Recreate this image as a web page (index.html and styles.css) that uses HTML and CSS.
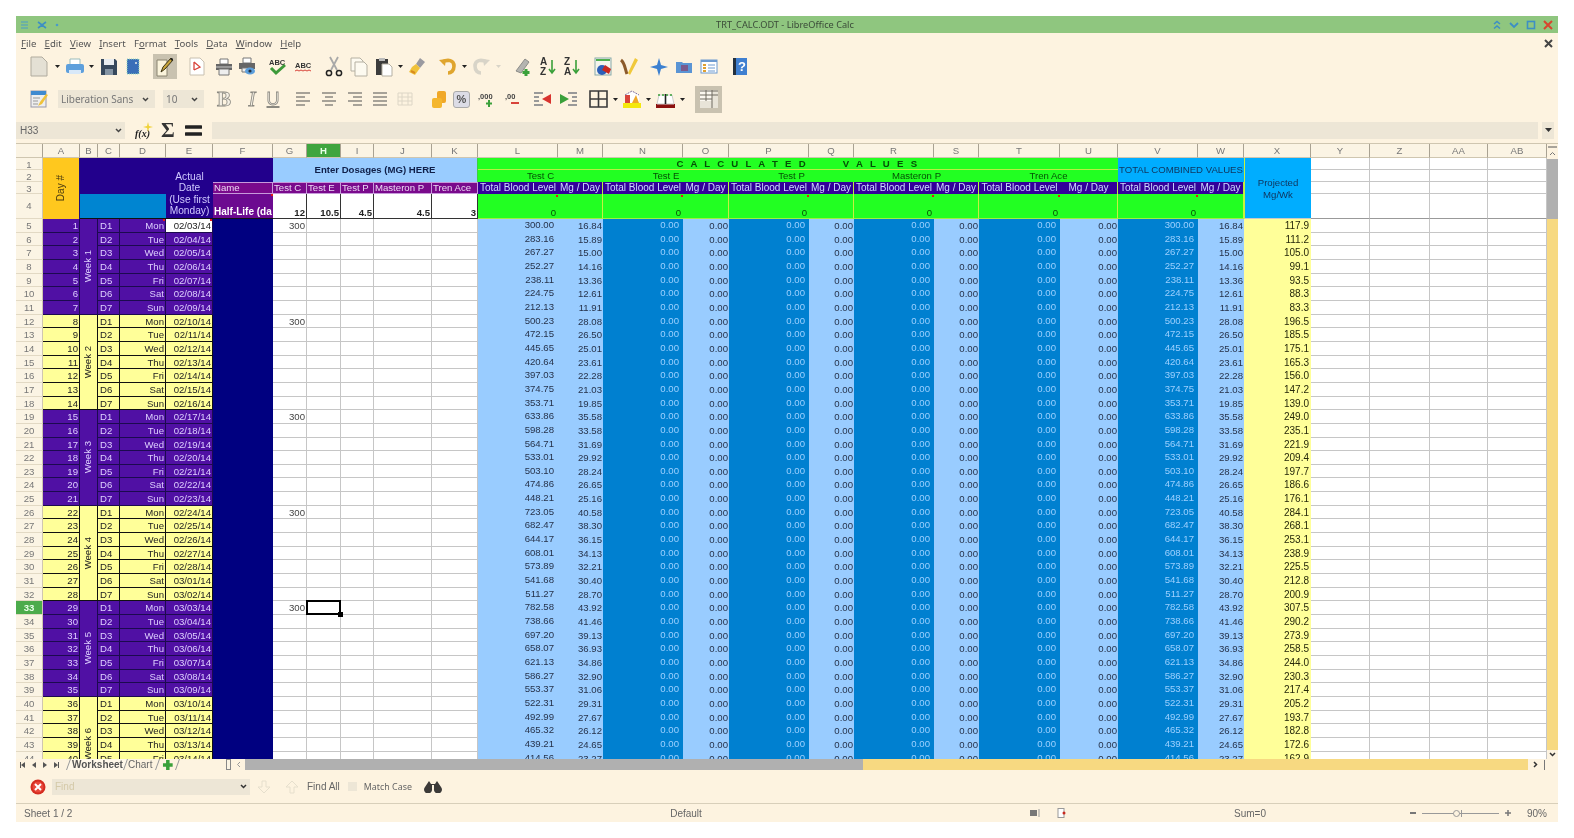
FILE: index.html
```html
<!DOCTYPE html>
<html lang="en">
<head>
    <meta charset="UTF-8">
    <title>TRT_CALC.ODT - LibreOffice Calc</title>
    <link rel="stylesheet" href="styles.css">
</head>
<body>
<div class="window">
    <!-- Title bar -->
    <div class="titlebar">
        <div class="wm-left">
            <svg width="10" height="8" viewBox="0 0 10 8"><path d="M1 1h7M1 4h7M1 7h7" stroke="#4a9bc8" stroke-width="1.2"/></svg>
            <svg class="m7" width="10" height="8" viewBox="0 0 10 8"><path d="M1 1l4 3 4-3M1 7l4-3 4 3" stroke="#3d8fc4" stroke-width="1.6" fill="none"/></svg>
            <svg class="m7" width="6" height="6" viewBox="0 0 6 6"><circle cx="3" cy="3" r="1.3" fill="#4a9bc8"/></svg>
        </div>
        <span class="title-text">TRT_CALC.ODT - LibreOffice Calc</span>
        <div class="wm-right">
            <svg width="10" height="10" viewBox="0 0 10 10"><path d="M2 4l3-2.500 3 2.500M2 8.500l3-2.500 3 2.500" stroke="#3d8fc4" stroke-width="1.6" fill="none"/></svg>
            <svg class="m7" width="10" height="10" viewBox="0 0 10 10"><path d="M1 3l4 4 4-4" stroke="#3d8fc4" stroke-width="1.8" fill="none"/></svg>
            <svg class="m7" width="10" height="10" viewBox="0 0 10 10"><rect x="1.5" y="1.5" width="7" height="7" stroke="#3d8fc4" stroke-width="1.6" fill="none"/></svg>
            <svg class="m7" width="10" height="10" viewBox="0 0 10 10"><path d="M1 1l8 8M9 1l-8 8" stroke="#d8452e" stroke-width="2"/></svg>
        </div>
    </div>

    <!-- Menu -->
    <div class="menubar">
        <span><u>F</u>ile</span><span><u>E</u>dit</span><span><u>V</u>iew</span><span><u>I</u>nsert</span><span>F<u>o</u>rmat</span><span><u>T</u>ools</span><span><u>D</u>ata</span><span><u>W</u>indow</span><span><u>H</u>elp</span>
        <svg class="menu-close" width="9" height="9" viewBox="0 0 9 9"><path d="M1 1l7 7M8 1l-7 7" stroke="#444" stroke-width="2"/></svg>
    </div>

    <!-- Standard toolbar -->
    <div class="toolbar tb-top">
        <svg width="18" height="21" viewBox="0 0 18 21"><path d="M1 1h11l5 5v14H1z" fill="#e4e0d4" stroke="#b0ab9e"/></svg>
        <svg class="m7 caret" width="5" height="3" viewBox="0 0 5 3"><path d="M0 0h5L2.5 3z"/></svg>
        <svg class="m5" width="20" height="18" viewBox="0 0 20 18"><path d="M5 1h10v6H5z" fill="#fff" stroke="#9bb"/><rect x="1" y="6" width="18" height="9" rx="2" fill="#5d9fdc"/><rect x="4" y="12" width="12" height="4" fill="#d8e8f8"/></svg>
        <svg class="m4 caret" width="5" height="3" viewBox="0 0 5 3"><path d="M0 0h5L2.5 3z"/></svg>
        <svg class="m6" width="18" height="18" viewBox="0 0 18 18"><path d="M1 1h14l2 2v14H1z" fill="#36485c"/><rect x="4" y="1" width="10" height="6" fill="#e8ecf0"/><rect x="5" y="11" width="8" height="6" fill="#8494a4"/></svg>
        <svg class="m8" width="14" height="17" viewBox="0 0 14 17"><rect x="1" y="1" width="12" height="15" fill="#3a6fb8" stroke="#9db" stroke-dasharray="1 1"/><rect x="9" y="4" width="2" height="2" fill="#bcd"/></svg>
        <div class="tb-btn m13 btn-edit">
            <svg width="18" height="20" viewBox="0 0 18 20"><path d="M1 3h10v16H1z" fill="#fbf4dc" stroke="#8a8470"/><path d="M5 15l2-5 8-9 2 2-8 9z" fill="#c9a53a" stroke="#3a3216"/><path d="M14 2l2 2 1-2-1-1z" fill="#222"/></svg>
        </div>
        <svg class="m12" width="16" height="19" viewBox="0 0 16 19"><path d="M1 1h10l4 4v13H1z" fill="#fff" stroke="#c8c0b0"/><path d="M5 5l6 5-6 3M5 5v8" fill="none" stroke="#d8433a" stroke-width="1.3"/></svg>
        <svg class="m10" width="18" height="18" viewBox="0 0 18 18"><path d="M5 1h8v5H5z" fill="#fff" stroke="#777"/><rect x="1" y="6" width="16" height="6" fill="#666"/><path d="M4 11h10v6H4z" fill="#eee" stroke="#777"/><path d="M1 9h16" stroke="#ccc"/></svg>
        <svg class="m5" width="18" height="19" viewBox="0 0 18 19"><path d="M5 1h8v5H5z" fill="#fff" stroke="#777"/><rect x="1" y="6" width="16" height="6" fill="#666"/><path d="M4 11h9v4H4z" fill="#eee" stroke="#777"/><ellipse cx="12" cy="14" rx="5" ry="3.6" fill="#5d9fdc"/><circle cx="12" cy="14" r="1.6" fill="#234"/></svg>
        <svg class="m12" width="20" height="19" viewBox="0 0 20 19"><text x="1" y="8" class="svg-abc">ABC</text><path d="M3 11l5 5 9-8" fill="none" stroke="#3d9a3a" stroke-width="3"/></svg>
        <svg class="m7" width="16" height="15" viewBox="0 0 16 15"><text x="0" y="9" class="svg-abc">ABC</text><path d="M0 12l2-1 2 1 2-1 2 1 2-1 2 1 2-1 2 1" fill="none" stroke="#d8433a"/></svg>
        <svg class="m14" width="18" height="21" viewBox="0 0 18 21"><path d="M5 1l7 13M13 1L6 14" stroke="#a8a8a8" stroke-width="1.8"/><circle cx="4" cy="17" r="2.6" fill="none" stroke="#222" stroke-width="1.5"/><circle cx="14" cy="17" r="2.6" fill="none" stroke="#222" stroke-width="1.5"/></svg>
        <svg class="m7" width="18" height="20" viewBox="0 0 18 20"><path d="M1 1h9l3 3v10H1z" fill="#fdfaf0" stroke="#b5b0a2"/><path d="M5 5h9l3 3v11H5z" fill="#fdfaf0" stroke="#b5b0a2"/></svg>
        <svg class="m7" width="18" height="20" viewBox="0 0 18 20"><rect x="1" y="2" width="12" height="16" fill="#3c3c3c"/><rect x="4" y="1" width="6" height="3" fill="#bbb"/><path d="M7 7h7l3 3v9H7z" fill="#fff" stroke="#b5b0a2"/></svg>
        <svg class="m5 caret" width="5" height="3" viewBox="0 0 5 3"><path d="M0 0h5L2.5 3z"/></svg>
        <svg class="m5" width="18" height="19" viewBox="0 0 18 19"><path d="M12 1l5 4-5 6-4-4z" fill="#9a9aa0"/><path d="M8 7l4 4-5 7-6-3 3-5z" fill="#f0c23a"/><path d="M3 14l4 2" stroke="#d88a1e" stroke-width="2"/></svg>
        <svg class="m12" width="19" height="18" viewBox="0 0 19 18"><path d="M4 4c6-3 12-2 12 4 0 5-3 7-6 7" fill="none" stroke="#dfa52e" stroke-width="3.6"/><path d="M1 2l7-1-1 7z" fill="#dfa52e"/></svg>
        <svg class="m5 caret" width="5" height="3" viewBox="0 0 5 3"><path d="M0 0h5L2.5 3z"/></svg>
        <svg class="m5" width="19" height="18" viewBox="0 0 19 18"><path d="M15 4C9 1 3 2 3 8c0 5 3 7 6 7" fill="none" stroke="#d8d4c8" stroke-width="3.6"/><path d="M18 2l-7-1 1 7z" fill="#d8d4c8"/></svg>
        <svg class="m5 caret-pale" width="5" height="3" viewBox="0 0 5 3"><path d="M0 0h5L2.5 3z"/></svg>
        <svg class="m12" width="20" height="19" viewBox="0 0 20 19"><path d="M3 14L12 2l4 3-8 11z" fill="#b4b4b0" stroke="#8c8c88"/><path d="M13 12v7M9.500 15.500h7" stroke="#3aa03a" stroke-width="3"/></svg>
        <svg class="m7" width="16" height="19" viewBox="0 0 16 19"><text x="0" y="8" class="svg-sort">A</text><text x="0" y="18" class="svg-sort">Z</text><path d="M12 3v12M9 12l3 4 3-4" fill="none" stroke="#3aa03a" stroke-width="1.6"/></svg>
        <svg class="m8" width="16" height="19" viewBox="0 0 16 19"><text x="0" y="8" class="svg-sort">Z</text><text x="0" y="18" class="svg-sort">A</text><path d="M12 3v12M9 12l3 4 3-4" fill="none" stroke="#3aa03a" stroke-width="1.6"/></svg>
        <svg class="m14" width="19" height="19" viewBox="0 0 19 19"><rect x="1" y="1" width="16" height="17" fill="#f4f4ec" stroke="#8aa"/><rect x="2" y="2" width="14" height="2" fill="#4fae4f"/><circle cx="8" cy="13" r="5" fill="#2c5fb8"/><path d="M8 13l3-5 6 4-2 5z" fill="#c8281e"/></svg>
        <svg class="m7" width="18" height="19" viewBox="0 0 18 19"><path d="M1 3c4 3 4 9 6 14" fill="none" stroke="#8c5a2a" stroke-width="3"/><path d="M8 16L15 1l3 2-8 15z" fill="#f0c83a"/></svg>
        <svg class="m12" width="18" height="18" viewBox="0 0 18 18"><path d="M9 0l2 7 7 2-7 2-2 7-2-7-7-2 7-2z" fill="#3c80d0"/></svg>
        <svg class="m7" width="18" height="15" viewBox="0 0 18 15"><path d="M1 3h6l1 1h9v10H1z" fill="#5a94d4"/><rect x="6" y="6" width="7" height="6" fill="#7a5a8c"/></svg>
        <svg class="m7" width="18" height="15" viewBox="0 0 18 15"><rect x="1" y="1" width="16" height="13" fill="#fff" stroke="#6c9ad0"/><rect x="1" y="1" width="16" height="2" fill="#6c9ad0"/><path d="M3 6h3M3 9h3M3 12h3" stroke="#e0a030" stroke-width="2"/><path d="M8 6h7M8 9h7M8 12h7" stroke="#6c9ad0"/></svg>
        <svg class="m15" width="14" height="17" viewBox="0 0 14 17"><rect x="0" y="0" width="14" height="17" fill="#3f7fd0"/><rect x="0" y="0" width="3" height="17" fill="#23303e"/><text x="5" y="13" class="svg-help">?</text></svg>
    </div>

    <!-- Formatting toolbar -->
    <div class="toolbar tb-format">
        <svg width="18" height="18" viewBox="0 0 18 18"><rect x="1" y="1" width="15" height="16" fill="#eee" stroke="#99a"/><rect x="1" y="1" width="15" height="4" fill="#3f8ad0"/><path d="M3 8h7M3 11h5M3 14h5" stroke="#999"/><path d="M8 16l2-4 6-8 2 1-6 9z" fill="#f0c23a"/></svg>
        <div class="combo m10 font-box"><span>Liberation Sans</span><svg width="7" height="5" viewBox="0 0 7 5"><path d="M1 1l2.500 2.500L6 1" stroke="#444" stroke-width="1.5" fill="none"/></svg></div>
        <div class="combo m8 size-box"><span>10</span><svg width="7" height="5" viewBox="0 0 7 5"><path d="M1 1l2.500 2.500L6 1" stroke="#444" stroke-width="1.5" fill="none"/></svg></div>
        <span class="fmt-letter m12 fmt-b">B</span>
        <span class="fmt-letter m13 fmt-i">I</span>
        <span class="fmt-letter m7 fmt-u">U</span>
        <svg class="m16 align" width="14" height="14" viewBox="0 0 14 14"><path d="M0 1h14M0 5h9M0 9h14M0 13h9"/></svg>
        <svg class="m12 align" width="14" height="14" viewBox="0 0 14 14"><path d="M0 1h14M3 5h8M0 9h14M3 13h8"/></svg>
        <svg class="m12 align" width="14" height="14" viewBox="0 0 14 14"><path d="M0 1h14M5 5h9M0 9h14M5 13h9"/></svg>
        <svg class="m11 align" width="14" height="14" viewBox="0 0 14 14"><path d="M0 1h14M0 5h14M0 9h14M0 13h14"/></svg>
        <svg class="m10" width="16" height="14" viewBox="0 0 16 14"><path d="M1 1h14v12H1zM1 5h14M1 9h14M5 1v12M11 1v12" fill="none" stroke="#ddd6c6"/></svg>
        <svg class="m19" width="14" height="17" viewBox="0 0 14 17"><rect x="5" y="0" width="9" height="12" rx="2" fill="#f0a828"/><rect x="0" y="7" width="10" height="10" rx="2" fill="#f4b62e"/></svg>
        <div class="pct m7">%</div>
        <svg class="m8" width="17" height="18" viewBox="0 0 17 18"><text x="0" y="9" class="svg-num">,000</text><path d="M11 10v7M8 13.500h6" stroke="#3aa03a" stroke-width="2"/></svg>
        <svg class="m10" width="15" height="18" viewBox="0 0 15 18"><text x="0" y="9" class="svg-num">,00</text><path d="M6 13h8" stroke="#d8433a" stroke-width="2"/></svg>
        <svg class="m14" width="18" height="16" viewBox="0 0 18 16"><path d="M0 2h9M0 6h5M0 10h5M0 14h9" stroke="#999" stroke-width="2"/><path d="M17 3v10l-9-5z" fill="#d8332e"/></svg>
        <svg class="m7" width="18" height="16" viewBox="0 0 18 16"><path d="M9 2h9M13 6h5M13 10h5M9 14h9" stroke="#999" stroke-width="2"/><path d="M1 3v10l9-5z" fill="#3aa03a"/></svg>
        <svg class="m12" width="19" height="18" viewBox="0 0 19 18"><path d="M1 1h17v16H1zM9.500 1v16M1 9h17" fill="none" stroke="#3a3a3a" stroke-width="1.6"/></svg>
        <svg class="m5 caret" width="5" height="3" viewBox="0 0 5 3"><path d="M0 0h5L2.500 3z"/></svg>
        <svg class="m5" width="18" height="18" viewBox="0 0 18 18"><rect x="0" y="13" width="18" height="5" fill="#f4e80e"/><path d="M2 13V5l7-4 7 4v8z" fill="#fff"/><path d="M2 5h5v8H2z" fill="#d8433a"/><path d="M9 13l4-8 3 8z" fill="#f0a828"/><path d="M2 5l7-4 7 4" fill="none" stroke="#7a6a9c" stroke-dasharray="2 1"/></svg>
        <svg class="m5 caret" width="5" height="3" viewBox="0 0 5 3"><path d="M0 0h5L2.500 3z"/></svg>
        <svg class="m5" width="19" height="18" viewBox="0 0 19 18"><rect x="0" y="14" width="19" height="4" fill="#8c1010"/><path d="M1 14l2-9h13l2 9z" fill="#fff" stroke="#ccc"/><path d="M9.500 4v10" stroke="#222" stroke-width="1.6"/><path d="M2 5h15" stroke="#3aa03a" stroke-dasharray="2 2" stroke-width="1.500"/></svg>
        <svg class="m5 caret" width="5" height="3" viewBox="0 0 5 3"><path d="M0 0h5L2.500 3z"/></svg>
        <div class="tb-btn m10 btn-grid">
            <svg width="18" height="18" viewBox="0 0 18 18"><rect width="18" height="18" fill="#e8e4d8"/><rect width="12" height="11" fill="#fbf8f0"/><path d="M0 5h18M0 9h12M0 1h18M6 0v11M12 0v18" stroke="#6f6a60" fill="none"/></svg>
        </div>
    </div>

    <!-- Formula bar -->
    <div class="formulabar">
        <div class="namebox"><span>H33</span><svg width="7" height="5" viewBox="0 0 7 5"><path d="M1 1l2.500 2.500L6 1" stroke="#444" stroke-width="1.5" fill="none"/></svg></div>
        <div class="fx"><span class="fx-text">f(x)</span><svg class="fx-star" width="10" height="10" viewBox="0 0 10 10"><path d="M5 0l1 4 4 1-4 1-1 4-1-4-4-1 4-1z" fill="#f0d23a"/></svg></div>
        <span class="sigma">Σ</span>
        <svg class="m9" width="17" height="13" viewBox="0 0 17 13"><path d="M1 3h15M1 10h15" stroke="#222" stroke-width="3.400" stroke-linecap="round"/></svg>
        <div class="formula-input"></div>
        <div class="formula-drop"><svg width="7" height="4" viewBox="0 0 7 4"><path d="M0 0h7L3.500 4z" fill="#333"/></svg></div>
    </div>

    <!-- Spreadsheet -->
    <div class="sheet-wrap">
        <div class="sheet" id="sheet">
            <div class="colh"></div>
            <div class="colh">A</div><div class="colh">B</div><div class="colh">C</div><div class="colh">D</div><div class="colh">E</div><div class="colh">F</div><div class="colh">G</div><div class="colh colh-on">H</div><div class="colh">I</div><div class="colh">J</div><div class="colh">K</div><div class="colh">L</div><div class="colh">M</div><div class="colh">N</div><div class="colh">O</div><div class="colh">P</div><div class="colh">Q</div><div class="colh">R</div><div class="colh">S</div><div class="colh">T</div><div class="colh">U</div><div class="colh">V</div><div class="colh">W</div><div class="colh">X</div><div class="colh">Y</div><div class="colh">Z</div><div class="colh">AA</div><div class="colh">AB</div>

            <!-- row 1 -->
            <div class="rh">1</div>
            <div class="c day-head r4"><span>Day #</span></div>
            <div class="c navy-top cs3 r3"></div>
            <div class="c date-head r4">Actual<br>Date<br>(Use first<br>Monday)</div>
            <div class="c navy-top r2"></div>
            <div class="c dose-head cs5 r2">Enter Dosages (MG) HERE</div>
            <div class="c calc-head cs10">C A L C U L A T E D       V A L U E S</div>
            <div class="c total-head cs2 r2">TOTAL COMBINED VALUES</div>
            <div class="c proj-head r4">Projected<br>Mg/Wk</div>
            <div class="c blank"></div><div class="c blank"></div><div class="c blank"></div><div class="c blank"></div>

            <!-- row 2 -->
            <div class="rh">2</div>
            <div class="c calc-sub cs2">Test C</div><div class="c calc-sub cs2">Test E</div><div class="c calc-sub cs2">Test P</div><div class="c calc-sub cs2">Masteron P</div><div class="c calc-sub cs2">Tren Ace</div>
            <div class="c blank"></div><div class="c blank"></div><div class="c blank"></div><div class="c blank"></div>

            <!-- row 3 -->
            <div class="rh">3</div>
            <div class="c name-cell">Name</div>
            <div class="c name-cell">Test C</div><div class="c name-cell">Test E</div><div class="c name-cell">Test P</div><div class="c name-cell">Masteron P</div><div class="c name-cell">Tren Ace</div>
            <div class="c calc-label">Total Blood Level</div><div class="c calc-label lab-end">Mg / Day</div>
            <div class="c calc-label">Total Blood Level</div><div class="c calc-label lab-end">Mg / Day</div>
            <div class="c calc-label">Total Blood Level</div><div class="c calc-label lab-end">Mg / Day</div>
            <div class="c calc-label">Total Blood Level</div><div class="c calc-label lab-end">Mg / Day</div>
            <div class="c calc-label">Total Blood Level</div><div class="c calc-label lab-end">Mg / Day</div>
            <div class="c calc-label">Total Blood Level</div><div class="c calc-label lab-end">Mg / Day</div>
            <div class="c blank"></div><div class="c blank"></div><div class="c blank"></div><div class="c blank"></div>

            <!-- row 4 -->
            <div class="rh rh-tall">4</div>
            <div class="c blue-fill cs3"></div>
            <div class="c half-life note">Half-Life (da</div>
            <div class="c halflife-val">12</div><div class="c halflife-val">10.5</div><div class="c halflife-val">4.5</div><div class="c halflife-val">4.5</div><div class="c halflife-val">3</div>
            <div class="c green-val note">0</div><div class="c green-end"></div>
            <div class="c green-val note">0</div><div class="c green-end"></div>
            <div class="c green-val note">0</div><div class="c green-end"></div>
            <div class="c green-val note">0</div><div class="c green-end"></div>
            <div class="c green-val note">0</div><div class="c green-end"></div>
            <div class="c green-val note">0</div><div class="c green-end"></div>
            <div class="c blank blank-tall"></div><div class="c blank blank-tall"></div><div class="c blank blank-tall"></div><div class="c blank blank-tall"></div>
        </div>
        <div class="vscroll">
            <div class="vs-top"><svg width="9" height="2" viewBox="0 0 9 2"><path d="M0 1h9" stroke="#555"/></svg><svg width="7" height="5" viewBox="0 0 7 5"><path d="M1 4l2.500-2.500L6 4" stroke="#777" fill="none"/></svg></div>
            <div class="vs-thumb"></div>
            <div class="vs-track"></div>
            <div class="vs-bottom"><svg width="7" height="5" viewBox="0 0 7 5"><path d="M1 1l2.500 2.500L6 1" stroke="#333" stroke-width="1.500" fill="none"/></svg></div>
        </div>
    </div>

    <!-- Sheet tabs and horizontal scrollbar -->
    <div class="tabbar">
        <div class="tab-nav">
            <svg width="5" height="6" viewBox="0 0 5 6"><path d="M0 0h1v6H0zM5 0v6L1 3z" fill="#555"/></svg>
            <svg width="4" height="6" viewBox="0 0 4 6"><path d="M4 0v6L0 3z" fill="#555"/></svg>
            <svg width="4" height="6" viewBox="0 0 4 6"><path d="M0 0v6l4-3z" fill="#555"/></svg>
            <svg width="5" height="6" viewBox="0 0 5 6"><path d="M4 0h1v6H4zM0 0v6l4-3z" fill="#555"/></svg>
        </div>
        <div class="tab tab-on"><span>Worksheet</span></div>
        <div class="tab tab-chart"><span>Chart</span></div>
        <div class="tab tab-add"><svg width="10" height="10" viewBox="0 0 10 10"><path d="M5 0v10M0 5h10" stroke="#3aa03a" stroke-width="3.500"/></svg></div>
        <div class="split"></div>
        <svg class="m5" width="5" height="7" viewBox="0 0 5 7"><path d="M4 1L1.500 3.500 4 6" stroke="#999" fill="none"/></svg>
        <div class="hs-thumb"></div>
        <div class="hs-track"></div>
        <svg class="m5" width="5" height="7" viewBox="0 0 5 7"><path d="M1 1l2.500 2.500L1 6" stroke="#333" stroke-width="1.500" fill="none"/></svg>
        <div class="hs-end"></div>
    </div>

    <!-- Find bar -->
    <div class="findbar">
        <svg width="16" height="16" viewBox="0 0 16 16"><circle cx="8" cy="8" r="7.500" fill="#d42c20"/><circle cx="8" cy="8" r="5.500" fill="#e8473a"/><path d="M5 5l6 6M11 5l-6 6" stroke="#fff" stroke-width="2"/></svg>
        <div class="find-input"><span>Find</span><svg width="7" height="5" viewBox="0 0 7 5"><path d="M1 1l2.500 2.500L6 1" stroke="#333" stroke-width="1.500" fill="none"/></svg></div>
        <svg class="m7" width="14" height="14" viewBox="0 0 14 14"><path d="M5 1h4v6h4l-6 6-6-6h4z" fill="none" stroke="#e6dfcd"/></svg>
        <svg class="m14" width="14" height="14" viewBox="0 0 14 14"><path d="M5 13h4V7h4L7 1 1 7h4z" fill="none" stroke="#e6dfcd"/></svg>
        <span class="find-all">Find All</span>
        <div class="check"></div>
        <span class="match">Match Case</span>
        <svg class="binoc" width="18" height="12" viewBox="0 0 18 12"><path d="M5 0L1 6a4 4 0 1 0 7 2V4h2v4a4 4 0 1 0 7-2L13 0l-2 3H7z" fill="#3c3a38"/></svg>
    </div>

    <!-- Status bar -->
    <div class="statusbar">
        <span class="st-sheet">Sheet 1 / 2</span>
        <span class="st-style">Default</span>
        <span></span>
        <div class="st-icons">
            <svg width="10" height="8" viewBox="0 0 10 8"><rect y="1" width="7" height="6" fill="#777"/><path d="M9 0v8" stroke="#999"/></svg>
            <svg width="10" height="10" viewBox="0 0 10 10"><rect x="1" y="0.500" width="6" height="9" fill="#fff" stroke="#999"/><circle cx="7" cy="5" r="1.500" fill="#c8281e"/></svg>
        </div>
        <span class="st-sum">Sum=0</span>
        <div class="st-zoom">
            <svg width="6" height="2" viewBox="0 0 6 2"><path d="M0 1h6" stroke="#777" stroke-width="2"/></svg>
            <div class="slider"><div class="knob"></div><div class="tick"></div></div>
            <svg width="6" height="6" viewBox="0 0 6 6"><path d="M0 3h6M3 0v6" stroke="#777" stroke-width="1.500"/></svg>
            <span class="st-pct">90%</span>
        </div>
    </div>
</div>
<script src="script.js"></script>
</body>
</html>
```

FILE: styles.css
```css
* {
    box-sizing: border-box;
}
body {
    margin: 0;
    background-color: white;
    font-family: "Liberation Sans", sans-serif;
    font-size: 10px;
    color: #222;
}
.window {
    position: relative;
    width: 1542px;
    height: 806px;
    margin: 16px;
    background-color: #fdf3e0;
    display: flex;
    flex-direction: column;
    overflow: hidden;
    /* the source capture is soft, keep text from looking sharper than it */
    filter: blur(0.35px);
}
.m4 { margin-left: 4px; }
.m5 { margin-left: 5px; }
.m6 { margin-left: 6px; }
.m7 { margin-left: 7px; }
.m8 { margin-left: 8px; }
.m9 { margin-left: 9px; }
.m10 { margin-left: 10px; }
.m11 { margin-left: 11px; }
.m12 { margin-left: 12px; }
.m13 { margin-left: 13px; }
.m14 { margin-left: 14px; }
.m15 { margin-left: 15px; }
.m16 { margin-left: 16px; }
.m19 { margin-left: 19px; }
svg {
    flex: none;
    display: block;
}
.caret { fill: #222; }
.caret-pale { fill: #d8d4c8; }

/* title bar */
.titlebar {
    height: 17px;
    flex: none;
    background-color: #8fc67f;
    display: flex;
    align-items: center;
    justify-content: space-between;
    padding: 0 5px 0 4px;
}
.wm-left, .wm-right {
    display: flex;
    align-items: center;
}
.title-text {
    font-family: "Noto Sans", sans-serif;
    font-size: 9.2px;
    color: #3a4a38;
    margin-left: 18px;
}

/* menu */
.menubar {
    height: 20px;
    flex: none;
    display: flex;
    align-items: center;
    gap: 8.2px;
    padding-left: 5px;
    font-family: "Noto Sans", sans-serif;
    font-size: 9.6px;
    color: #555;
}
.menu-close {
    margin-left: auto;
    margin-right: 5px;
}

/* toolbars */
.toolbar {
    flex: none;
    display: flex;
    align-items: center;
    padding-left: 14px;
}
.tb-top { height: 27px; }
.tb-format { height: 38px; }
.tb-btn {
    background-color: #c9c2b0;
    display: flex;
    align-items: center;
    justify-content: center;
    flex: none;
}
.btn-edit {
    width: 24px;
    height: 25px;
}
.btn-grid {
    width: 27px;
    height: 27px;
}
.svg-abc {
    font-family: "Liberation Sans", sans-serif;
    font-size: 7.5px;
    font-weight: bold;
    fill: #333;
}
.svg-sort {
    font-family: "Liberation Sans", sans-serif;
    font-size: 10px;
    font-weight: bold;
    fill: #333;
}
.svg-help {
    font-family: "Liberation Sans", sans-serif;
    font-size: 13px;
    font-weight: bold;
    fill: #fff;
}
.svg-num {
    font-family: "Liberation Sans", sans-serif;
    font-size: 7.5px;
    font-weight: bold;
    fill: #444;
}
.combo {
    height: 18px;
    flex: none;
    background-color: #ede6d6;
    display: flex;
    align-items: center;
    justify-content: space-between;
    padding: 0 6px 0 3px;
    font-family: "Noto Sans", sans-serif;
    font-size: 10px;
    color: #777;
}
.font-box { width: 97px; }
.size-box { width: 41px; }
.fmt-letter {
    flex: none;
    font-family: "Liberation Serif", serif;
    font-size: 21px;
    line-height: 22px;
    color: #f4efe4;
    -webkit-text-stroke: 0.8px #8a8880;
    text-align: center;
}
.fmt-b {
    width: 16px;
    font-weight: bold;
}
.fmt-i {
    width: 14px;
    font-style: italic;
}
.fmt-u {
    width: 14px;
    text-decoration: underline;
    text-decoration-thickness: 2px;
    text-decoration-color: #8a8880;
    text-underline-offset: 1px;
    font-family: "Liberation Sans", sans-serif;
    font-size: 18px;
}
.align path {
    stroke: #8a8880;
    stroke-width: 1.5;
}
.pct {
    width: 17px;
    height: 17px;
    flex: none;
    background-color: #dcdce6;
    border: 1px solid #aaa;
    border-radius: 3px;
    text-align: center;
    font-size: 11px;
    line-height: 15px;
    font-weight: bold;
    color: #555;
}

/* formula bar */
.formulabar {
    height: 26px;
    flex: none;
    display: flex;
    align-items: center;
    border-bottom: 1px solid #cfc6b0;
    padding-bottom: 1px;
}
.namebox {
    width: 109px;
    height: 17px;
    flex: none;
    background-color: #ede6d6;
    display: flex;
    align-items: center;
    justify-content: space-between;
    padding: 0 3px 0 4px;
    font-size: 10px;
    color: #666;
}
.fx {
    position: relative;
    width: 18px;
    height: 17px;
    margin-left: 10px;
    flex: none;
}
.fx-text {
    position: absolute;
    left: 0;
    bottom: 0;
    font-family: "Liberation Serif", serif;
    font-style: italic;
    font-weight: bold;
    font-size: 10px;
    color: #222;
}
.fx-star {
    position: absolute;
    top: 0;
    right: 0;
}
.sigma {
    margin-left: 8px;
    width: 15px;
    font-family: "Liberation Serif", serif;
    font-size: 21px;
    line-height: 20px;
    font-weight: bold;
    color: #333;
}
.formula-input {
    flex: 1;
    height: 17px;
    margin-left: 10px;
    background-color: #ede6d6;
}
.formula-drop {
    width: 12px;
    height: 17px;
    margin: 0 4px 0 4px;
    background-color: #ede6d6;
    display: flex;
    align-items: center;
    justify-content: center;
}

/* sheet */
.sheet-wrap {
    height: 615px;
    flex: none;
    display: flex;
}
.sheet {
    width: 1531px;
    height: 615px;
    overflow: hidden;
    background-color: white;
    display: grid;
    grid-template-columns: 27px 37px 18px 22px 46px 47px 60px 34px 34px 33px 58px 46px 80px 45px 80px 46px 80px 45px 80px 45px 81px 58px 80px 46px 67px 59px 60px 58px 59px;
    grid-template-rows: 14px 11.5px 12px 12.5px 25px;
    grid-auto-rows: 13.66px;
    font-size: 9.6px;
    line-height: 14.5px;
}
.colh {
    background-color: #fbf4e4;
    border-right: 1px solid #a9a292;
    border-bottom: 1px solid #cfc6b0;
    text-align: center;
    color: #777;
    line-height: 13px;
}
.colh-on {
    background-color: #3fa53f;
    color: #e8ffe8;
    font-weight: bold;
}
.rh {
    background-color: #fbf4e4;
    border-right: 1px solid #cfc6b0;
    border-bottom: 1px solid #e2d9c4;
    text-align: center;
    color: #777;
    overflow: hidden;
}
.rh-on {
    background-color: #4cab4c;
    color: #eaffea;
    font-weight: bold;
}
.rh-tall {
    line-height: 24px;
}
.c {
    overflow: hidden;
    white-space: nowrap;
    padding: 0 2px;
    min-width: 0;
    min-height: 0;
}
.cs2 { grid-column: span 2; }
.cs3 { grid-column: span 3; }
.cs5 { grid-column: span 5; }
.cs10 { grid-column: span 10; }
.r2 { grid-row: span 2; }
.r3 { grid-row: span 3; }
.r4 { grid-row: span 4; }
.r7 { grid-row: span 7; }
.note {
    position: relative;
}
.note::after {
    content: "";
    position: absolute;
    top: 0;
    right: 0;
    width: 2px;
    height: 2px;
    background-color: #e01818;
}

/* header block */
.day-head {
    background-color: #ffc81e;
    border-right: 1px solid #20107a;
    display: flex;
    align-items: center;
    justify-content: center;
    color: #4a3a10;
    font-size: 10px;
}
.day-head span, .week span {
    writing-mode: vertical-rl;
    transform: rotate(180deg);
}
.navy-top {
    background-color: #22008c;
}
.date-head {
    background-color: #22008c;
    border-bottom: 1px solid #111;
    color: #cfc8ff;
    text-align: center;
    font-size: 10.2px;
    line-height: 11.3px;
    padding: 13px 0 0;
    white-space: nowrap;
}
.blue-fill {
    background-color: #0085d1;
    border-bottom: 1px solid #111;
}
.dose-head {
    background-color: #99ccff;
    color: #10204a;
    font-weight: bold;
    text-align: center;
    line-height: 23px;
    border-right: 1px solid #3fcf3f;
}
.calc-head {
    background-color: #22ff22;
    color: #055005;
    font-weight: bold;
    text-align: center;
    white-space: pre;
    letter-spacing: 2.3px;
    line-height: 12px;
    border-bottom: 1px solid #b8f040;
}
.calc-sub {
    background-color: #22ff22;
    color: #055005;
    text-align: center;
    line-height: 12px;
}
.total-head {
    background-color: #00adff;
    color: #10345c;
    text-align: left;
    line-height: 23px;
    padding-left: 1px;
    font-size: 9.6px;
}
.proj-head {
    background-color: #00adff;
    color: #10345c;
    text-align: center;
    line-height: 12px;
    padding-top: 19px;
    border-bottom: 1px solid #c8c8c8;
    border-left: 1px solid #c8f040;
}
.name-cell {
    background-color: #7a0a8c;
    border: 1px solid #c79adb;
    border-width: 1px 1px 1px 0;
    color: #ecd8f4;
    line-height: 10.5px;
    padding: 0 1px;
}
.half-life {
    background-color: #6c0a90;
    color: white;
    font-weight: bold;
    font-size: 10px;
    padding: 11px 0 0 1px;
    line-height: 14px;
    border-bottom: 1px solid #111;
}
.halflife-val {
    background-color: white;
    color: #222;
    font-weight: bold;
    text-align: right;
    padding: 12px 1px 0 0;
    line-height: 13px;
    border-right: 1px solid #333;
    border-bottom: 1px solid #333;
}
.calc-label {
    background-color: #33009a;
    color: #cdd8ff;
    font-size: 10px;
    line-height: 11px;
    padding: 0;
    text-align: center;
}
.lab-end {
    border-right: 1px solid #b8f040;
}
.green-val, .green-end {
    background-color: #22ff22;
    border-bottom: 1px solid #a0f040;
}
.green-val {
    color: #055005;
    text-align: right;
    padding: 12px 2px 0 0;
    line-height: 13px;
}
.green-val.note::after {
    top: 1px;
}
.green-end {
    border-right: 1px solid #c8f040;
}

/* body rows */
.purple {
    background-color: #5010a4;
    border-right: 1px solid #1c0a50;
    border-bottom: 1px solid #1c0a50;
    color: #ded0ff;
}
.yellow {
    background-color: #ffff99;
    border-right: 1px solid #111;
    border-bottom: 1px solid #111;
    color: #222;
}
.right {
    text-align: right;
    padding-right: 1px;
}
.week {
    display: flex;
    align-items: center;
    justify-content: center;
    padding: 0;
}
.first-date {
    background-color: white;
    color: #222;
}
.half-blank {
    background-color: #000080;
}
.blank {
    background-color: white;
    border-right: 1px solid #c6c6c6;
    border-bottom: 1px solid #c6c6c6;
}
.blank-tall {
    border-bottom: 1px solid #999;
}
.dose {
    background-color: white;
    color: #444;
    text-align: right;
    padding-right: 1px;
    border-right: 1px solid #c6c6c6;
    border-bottom: 1px solid #c6c6c6;
}
.cursor {
    position: relative;
    overflow: visible;
    z-index: 2;
    border: 2px solid black;
    margin: -1px 0 0 -1px;
}
.cursor::after {
    content: "";
    position: absolute;
    right: -4px;
    bottom: -4px;
    width: 5px;
    height: 5px;
    background-color: black;
}
.light, .deep, .level {
    text-align: right;
    padding-right: 3px;
}
.light {
    background-color: #99ccff;
    color: #26324a;
    padding-right: 1px;
}
.deep {
    background-color: #0080d0;
    color: #9cd0ff;
    line-height: 12.5px;
    padding-right: 4px;
}
.level {
    background-color: #99ccff;
    color: #26324a;
    line-height: 12.5px;
    padding-right: 4px;
}
.proj {
    background-color: #ffff99;
    color: #26280a;
    text-align: right;
    padding-right: 2px;
    font-size: 10px;
}

/* vertical scrollbar */
.vscroll {
    width: 11px;
    flex: none;
    display: flex;
    flex-direction: column;
}
.vs-top {
    height: 15px;
    padding-top: 2px;
    display: flex;
    flex-direction: column;
    align-items: center;
    gap: 3px;
}
.vs-thumb {
    height: 60px;
    background-color: #b0b0b0;
}
.vs-track {
    flex: 1;
    background-color: #f7d981;
}
.vs-bottom {
    height: 9px;
    display: flex;
    align-items: center;
    justify-content: center;
}

/* tabs */
.tabbar {
    height: 11px;
    flex: none;
    display: flex;
    align-items: center;
    padding-left: 4px;
    font-size: 10px;
    color: #666;
}
.tab-nav {
    width: 48px;
    flex: none;
    display: flex;
    align-items: center;
    gap: 7px;
}
.tab {
    height: 11px;
    flex: none;
    padding: 0 3px;
    border-right: 1px solid #999;
    transform: skewX(-20deg);
    line-height: 11px;
}
.tab span {
    display: block;
    transform: skewX(20deg);
}
.tab-on {
    width: 58px;
    border-left: 1px solid #999;
    font-weight: bold;
    color: #555;
    background-color: #fff8ea;
}
.tab-chart {
    width: 32px;
    padding-left: 2px;
}
.tab-add {
    width: 20px;
    display: flex;
    align-items: center;
    justify-content: center;
}
.tab-add svg {
    transform: skewX(20deg);
}
.split {
    width: 5px;
    height: 11px;
    flex: none;
    margin-left: 48px;
    background-color: #fbf4e4;
    border: 1px solid #888;
}
.hs-thumb {
    width: 618px;
    height: 11px;
    flex: none;
    margin-left: 4px;
    background-color: #b0b0b0;
}
.hs-track {
    flex: 1;
    height: 11px;
    background-color: #f7d981;
}
.hs-end {
    width: 1px;
    height: 10px;
    margin: 0 13px 0 6px;
    background-color: #777;
}

/* find bar */
.findbar {
    height: 33px;
    flex: none;
    display: flex;
    align-items: center;
    padding: 0 0 0 14px;
    font-size: 10px;
    color: #666;
}
.find-input {
    width: 198px;
    height: 16px;
    flex: none;
    margin-left: 6px;
    background-color: #ede6d6;
    display: flex;
    align-items: center;
    justify-content: space-between;
    padding: 0 3px 0 3px;
    color: #d4c9a8;
}
.find-all {
    margin-left: 8px;
}
.check {
    width: 9px;
    height: 9px;
    flex: none;
    margin-left: 8px;
    background-color: #ede6d6;
}
.match {
    margin-left: 7px;
    font-family: "Noto Sans", sans-serif;
    font-size: 8.9px;
}
.binoc {
    margin-left: 12px;
}

/* status bar */
.statusbar {
    flex: 1;
    display: grid;
    grid-template-columns: 600px 140px 264px 50px 335px 153px;
    align-items: center;
    border-top: 1px solid #d8cfba;
    font-size: 10px;
    color: #666;
}
.st-sheet {
    padding-left: 8px;
}
.st-style {
    text-align: center;
}
.st-icons {
    display: flex;
    align-items: center;
    gap: 17px;
    padding-left: 10px;
}
.st-sum {
    padding-left: 164px;
}
.st-zoom {
    display: flex;
    align-items: center;
    padding-left: 5px;
    gap: 6px;
}
.st-pct {
    margin-left: 10px;
}
.slider {
    position: relative;
    width: 77px;
    height: 1px;
    background-color: #999;
}
.knob {
    position: absolute;
    left: 31px;
    top: -3px;
    width: 7px;
    height: 7px;
    border-radius: 50%;
    border: 1px solid #999;
    background-color: #fdf3e0;
}
.tick {
    position: absolute;
    left: 39px;
    top: -3px;
    width: 1px;
    height: 7px;
    background-color: #999;
}
```

FILE: script.js
```js
// rows 5-44 of the worksheet
var levels = [300.00,283.16,267.27,252.27,238.11,224.75,212.13,500.23,472.15,445.65,420.64,397.03,374.75,353.71,633.86,598.28,564.71,533.01,503.10,474.86,448.21,723.05,682.47,644.17,608.01,573.89,541.68,511.27,782.58,738.66,697.20,658.07,621.13,586.27,553.37,522.31,492.99,465.32,439.21,414.56];
var mgDay = [16.84,15.89,15.00,14.16,13.36,12.61,11.91,28.08,26.50,25.01,23.61,22.28,21.03,19.85,35.58,33.58,31.69,29.92,28.24,26.65,25.16,40.58,38.30,36.15,34.13,32.21,30.40,28.70,43.92,41.46,39.13,36.93,34.86,32.90,31.06,29.31,27.67,26.12,24.65,23.27];
var projected = [117.9,111.2,105.0,99.1,93.5,88.3,83.3,196.5,185.5,175.1,165.3,156.0,147.2,139.0,249.0,235.1,221.9,209.4,197.7,186.6,176.1,284.1,268.1,253.1,238.9,225.5,212.8,200.9,307.5,290.2,273.9,258.5,244.0,230.3,217.4,205.2,193.7,182.8,172.6,162.9];
var dayNames = ['Mon','Tue','Wed','Thu','Fri','Sat','Sun'];
var sheet = document.getElementById('sheet');

function cell(cls, text) {
    var d = document.createElement('div');
    d.className = cls;
    if (text !== undefined) d.textContent = text;
    sheet.appendChild(d);
    return d;
}

function dateText(i) {
    var d = new Date(Date.UTC(2014, 1, 3 + i));
    var mm = String(d.getUTCMonth() + 1).padStart(2, '0');
    var dd = String(d.getUTCDate()).padStart(2, '0');
    return mm + '/' + dd + '/14';
}

for (var i = 0; i < levels.length; i++) {
    var rowNum = i + 5;
    var week = Math.floor(i / 7);
    var shade = week % 2 === 0 ? 'purple' : 'yellow';

    cell(rowNum === 33 ? 'rh rh-on' : 'rh', rowNum);
    cell('c right ' + shade, i + 1);
    if (i % 7 === 0) {
        var w = cell('c week r7 ' + shade);
        w.innerHTML = '<span>Week ' + (week + 1) + '</span>';
    }
    cell('c ' + shade, 'D' + (i % 7 + 1));
    var dayCell = cell('c right ' + shade, dayNames[i % 7]);
    var dateCell = cell('c right ' + shade, dateText(i));
    if (i === 0) {
        dayCell.classList.add('note');
        dateCell.classList.add('first-date', 'note');
    }
    cell('c half-blank');

    cell('c dose', i % 7 === 0 && i < 35 ? '300' : '');
    cell(rowNum === 33 ? 'c cursor' : 'c blank');
    cell('c blank');
    cell('c blank');
    cell('c blank');

    cell('c level', levels[i].toFixed(2));
    cell('c light', mgDay[i].toFixed(2));
    for (var k = 0; k < 4; k++) {
        cell('c deep', '0.00');
        cell('c light', '0.00');
    }
    cell('c deep', levels[i].toFixed(2));
    cell('c light', mgDay[i].toFixed(2));
    cell('c proj', projected[i].toFixed(1));

    cell('c blank');
    cell('c blank');
    cell('c blank');
    cell('c blank');
}
```
